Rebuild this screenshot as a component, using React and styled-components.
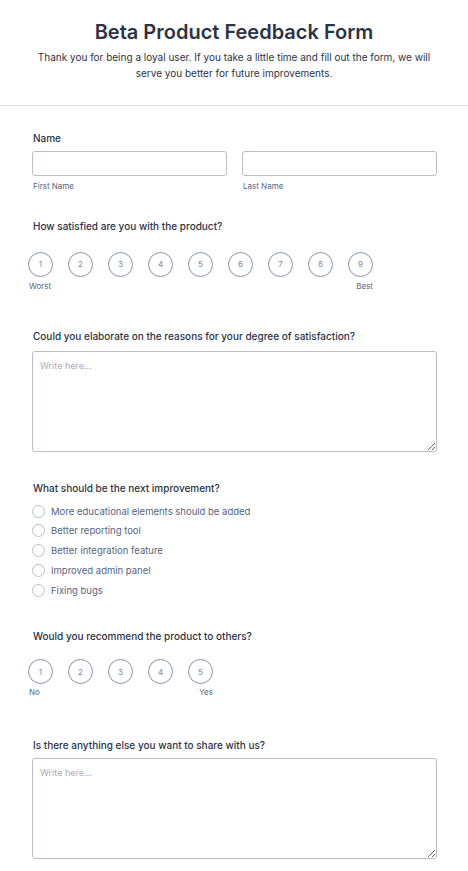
import React from "react";
import styled, { createGlobalStyle } from "styled-components";

const GlobalStyle = createGlobalStyle`
  * { box-sizing: border-box; }
  body {
    margin: 0;
    background: #ffffff;
    font-family: Inter, "Noto Sans", sans-serif;
    color: #2c3345;
  }
`;

const Page = styled.div`
  width: 100%;
  background: #fff;
`;

const Header = styled.header`
  padding: 20px 24px 24px;
  text-align: center;
  border-bottom: 1px solid #dadde5;
`;

const Title = styled.h1`
  margin: 0;
  font-size: 20px;
  line-height: 24px;
  font-weight: 600;
  color: #2c3345;
`;

const Subtitle = styled.p`
  margin: 4.5px 0 0;
  font-size: 10px;
  line-height: 16px;
  color: #2c3345;
`;

const Form = styled.form`
  padding: 25px 31px 10px 32px;
  display: flex;
  flex-direction: column;
`;

const Field = styled.div`
  display: flex;
  flex-direction: column;
  margin-top: ${(p) => p.$gap || 0}px;
`;

const Label = styled.label`
  font-size: 10px;
  line-height: 14px;
  font-weight: 500;
  color: #2c3345;
  padding-left: 1px;
`;

const NameRow = styled.div`
  display: grid;
  grid-template-columns: 1fr 1fr;
  column-gap: 15px;
  margin-top: 6px;
`;

const NameCol = styled.div`
  display: flex;
  flex-direction: column;
`;

const TextInput = styled.input`
  height: 25px;
  width: 100%;
  border: 1px solid #b8bdc9;
  border-radius: 3px;
  padding: 0 7px;
  font-family: inherit;
  font-size: 10px;
  outline: none;
`;

const SubLabel = styled.span`
  margin-top: 5px;
  font-size: 8px;
  line-height: 10px;
  color: #57647e;
  padding-left: 1px;
`;

const Scale = styled.div`
  margin-left: -4px;
  margin-top: ${(p) => p.$gap}px;
  width: ${(p) => p.$count * 25 + (p.$count - 1) * 15}px;
  display: flex;
  flex-direction: column;
`;

const ScaleRow = styled.div`
  display: flex;
  gap: 15px;
`;

const ScaleItem = styled.div`
  width: 25px;
  height: 25px;
  border-radius: 50%;
  border: 1px solid #8790a5;
  display: flex;
  align-items: center;
  justify-content: center;
  font-size: 8px;
  color: #7d879d;
  flex-shrink: 0;
`;

const ScaleEnds = styled.div`
  display: flex;
  justify-content: space-between;
  margin-top: ${(p) => p.$gap}px;
  font-size: 8px;
  line-height: 10px;
  color: #57647e;
  padding-left: 1px;
`;

const TextArea = styled.textarea`
  margin-top: ${(p) => p.$gap || 8}px;
  height: 101px;
  width: 100%;
  border: 1px solid #b8bdc9;
  border-radius: 3px;
  padding: 8px 7px;
  font-family: inherit;
  font-size: 9px;
  line-height: 12px;
  color: #2c3345;
  outline: none;
  resize: vertical;

  &::placeholder {
    color: #a7abb6;
  }
`;

const Options = styled.div`
  margin-top: 10px;
  display: flex;
  flex-direction: column;
`;

const Option = styled.label`
  height: 19.8px;
  display: flex;
  align-items: flex-start;
  gap: 6px;
  font-size: 9.5px;
  line-height: 13px;
  color: #57647e;
`;

const Radio = styled.span`
  width: 13px;
  height: 13px;
  border-radius: 50%;
  border: 1px solid #b8bdc9;
  flex-shrink: 0;
  background: #fff;
`;

const satisfaction = [1, 2, 3, 4, 5, 6, 7, 8, 9];
const recommend = [1, 2, 3, 4, 5];
const improvements = [
  "More educational elements should be added",
  "Better reporting tool",
  "Better integration feature",
  "Improved admin panel",
  "Fixing bugs",
];

const RatingScale = ({ values, low, high, gap, endsGap }) => (
  <Scale $count={values.length} $gap={gap}>
    <ScaleRow>
      {values.map((v) => (
        <ScaleItem key={v}>{v}</ScaleItem>
      ))}
    </ScaleRow>
    <ScaleEnds $gap={endsGap}>
      <span>{low}</span>
      <span>{high}</span>
    </ScaleEnds>
  </Scale>
);

export default function App() {
  return (
    <Page>
      <GlobalStyle />
      <Header>
        <Title>Beta Product Feedback Form</Title>
        <Subtitle>
          Thank you for being a loyal user. If you take a little time and fill
          out the form, we will serve you better for future improvements.
        </Subtitle>
      </Header>
      <Form onSubmit={(e) => e.preventDefault()}>
        <Field>
          <Label>Name</Label>
          <NameRow>
            <NameCol>
              <TextInput type="text" />
              <SubLabel>First Name</SubLabel>
            </NameCol>
            <NameCol>
              <TextInput type="text" />
              <SubLabel>Last Name</SubLabel>
            </NameCol>
          </NameRow>
        </Field>

        <Field $gap={28}>
          <Label>How satisfied are you with the product?</Label>
          <RatingScale values={satisfaction} low="Worst" high="Best" gap={19} endsGap={4} />
        </Field>

        <Field $gap={38}>
          <Label>Could you elaborate on the reasons for your degree of satisfaction?</Label>
          <TextArea placeholder="Write here..." />
        </Field>

        <Field $gap={29}>
          <Label>What should be the next improvement?</Label>
          <Options>
            {improvements.map((item) => (
              <Option key={item}>
                <Radio />
                {item}
              </Option>
            ))}
          </Options>
        </Field>

        <Field $gap={26}>
          <Label>Would you recommend the product to others?</Label>
          <RatingScale values={recommend} low="No" high="Yes" gap={16} endsGap={3} />
        </Field>

        <Field $gap={41}>
          <Label>Is there anything else you want to share with us?</Label>
          <TextArea $gap={6} placeholder="Write here..." />
        </Field>
      </Form>
    </Page>
  );
}
